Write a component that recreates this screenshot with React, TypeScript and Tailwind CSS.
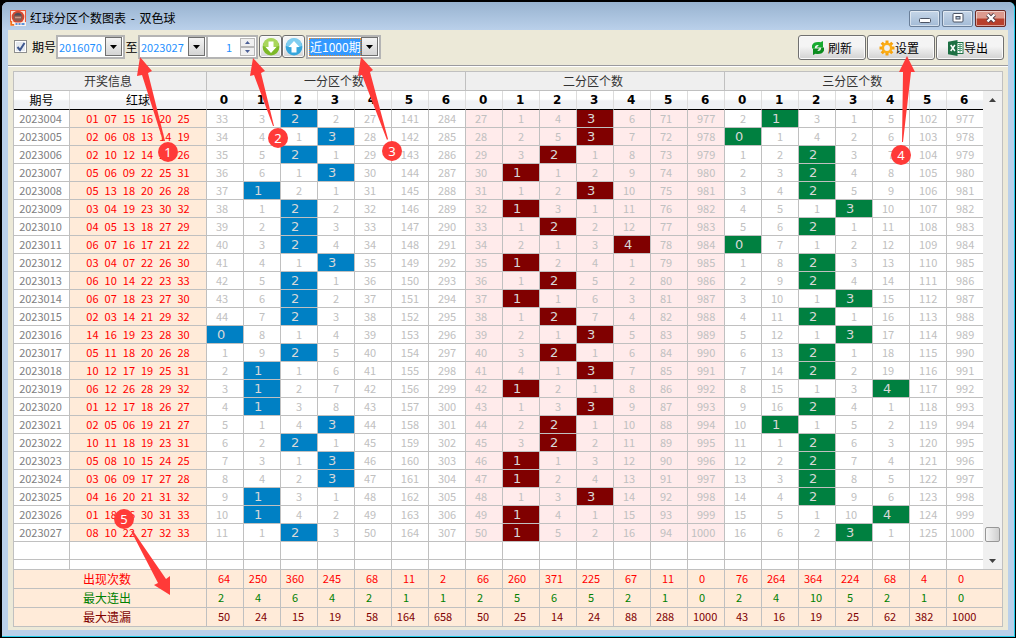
import type { ReactNode } from 'react';

const draws: { balls: string; hits: [number, number, number] }[] = [
  { balls: '01 07 15 16 20 25', hits: [2, 3, 1] },
  { balls: '02 06 08 13 14 19', hits: [3, 3, 0] },
  { balls: '02 10 12 14 20 26', hits: [2, 2, 2] },
  { balls: '05 06 09 22 25 31', hits: [3, 1, 2] },
  { balls: '05 13 18 20 26 28', hits: [1, 3, 2] },
  { balls: '03 04 19 23 30 32', hits: [2, 1, 3] },
  { balls: '04 05 13 18 27 29', hits: [2, 2, 2] },
  { balls: '06 07 16 17 21 22', hits: [2, 4, 0] },
  { balls: '03 04 07 22 26 30', hits: [3, 1, 2] },
  { balls: '06 10 14 22 23 33', hits: [2, 2, 2] },
  { balls: '06 07 18 23 27 30', hits: [2, 1, 3] },
  { balls: '02 03 14 21 29 32', hits: [2, 2, 2] },
  { balls: '14 16 19 23 28 30', hits: [0, 3, 3] },
  { balls: '05 11 18 20 26 28', hits: [2, 2, 2] },
  { balls: '10 12 17 19 25 31', hits: [1, 3, 2] },
  { balls: '06 12 26 28 29 32', hits: [1, 1, 4] },
  { balls: '01 12 17 18 26 27', hits: [1, 3, 2] },
  { balls: '02 05 06 19 21 27', hits: [3, 2, 1] },
  { balls: '10 11 18 19 23 31', hits: [2, 2, 2] },
  { balls: '05 08 10 15 24 25', hits: [3, 1, 2] },
  { balls: '03 06 09 17 27 28', hits: [3, 1, 2] },
  { balls: '04 16 20 21 31 32', hits: [1, 3, 2] },
  { balls: '01 18 26 30 31 33', hits: [1, 1, 4] },
  { balls: '08 10 22 27 32 33', hits: [2, 1, 3] },
];

const FIRST_ISSUE = 2023004;

// Omission counters as they stood before the first visible draw.
const startMisses = [
  [32, 2, 0, 1, 26, 140, 283],
  [26, 0, 3, 0, 5, 70, 976],
  [1, 0, 2, 0, 4, 101, 976],
];

const zones = [
  { title: '一分区个数', hit: 'bg-[#0080c4]', miss: 'bg-white' },
  { title: '二分区个数', hit: 'bg-[#800000]', miss: 'bg-[#ffebeb]' },
  { title: '三分区个数', hit: 'bg-[#008040]', miss: 'bg-white' },
];

type Row = { issue: number; balls: string[]; cells: { value: number; hit: boolean; zone: number }[] };

function buildRows(): Row[] {
  const misses = startMisses.map((z) => [...z]);
  return draws.map((d, i) => ({
    issue: FIRST_ISSUE + i,
    balls: d.balls.split(' '),
    cells: misses.flatMap((zone, z) =>
      zone.map((_, n) => {
        const hit = d.hits[z] === n;
        zone[n] = hit ? 0 : zone[n] + 1;
        return { value: hit ? n : zone[n], hit, zone: z };
      }),
    ),
  }));
}

const rows = buildRows();
const countCols = Array.from({ length: 21 }, (_, i) => i);

const summary = [
  {
    label: '出现次数',
    color: 'text-[#ff0000]',
    values: [64, 250, 360, 245, 68, 11, 2, 66, 260, 371, 225, 67, 11, 0, 76, 264, 364, 224, 68, 4, 0],
  },
  {
    label: '最大连出',
    color: 'text-[#008000]',
    values: [2, 4, 6, 4, 2, 1, 1, 2, 5, 6, 5, 2, 1, 0, 2, 4, 10, 5, 2, 1, 0],
  },
  {
    label: '最大遗漏',
    color: 'text-[#800000]',
    values: [50, 24, 15, 19, 58, 164, 658, 50, 25, 14, 24, 88, 288, 1000, 43, 16, 19, 25, 62, 382, 1000],
  },
];

const line = 'border-r border-b border-[#c0c0c0] p-0 text-center';
const headFill = 'bg-linear-to-b from-white from-45% to-[#eff1f4] to-55%';

function AppLogo() {
  return (
    <svg viewBox="0 0 16 16" className="size-4 shrink-0" aria-hidden="true">
      <rect width="16" height="16" fill="#ef5a3a" />
      <rect x="1" y="1" width="14" height="14" fill="#fbe3d8" />
      <circle cx="8" cy="7" r="6.300" fill="#d8452e" />
      <circle cx="8" cy="7" r="4.600" fill="#8c5a50" />
      <path d="M4.300 5.500a4 4 0 0 1 7.400 0z" fill="#4c4a58" />
      <path d="M5 7.500h6" stroke="#c99a88" strokeWidth="1.500" />
      <path d="M0 12l4 .5h8l4-.5v4H0z" fill="#fdf1ea" />
      <path d="M1.200 11v3.800h3" stroke="#f0701c" strokeWidth="1.800" fill="none" />
      <path d="M5.500 14h2M8.500 14h2M11.500 14h3" stroke="#5b93dc" strokeWidth="2" />
    </svg>
  );
}

function ArrowBall({ up }: { up?: boolean }) {
  return (
    <svg viewBox="0 0 18 18" className="size-4.5" aria-hidden="true">
      <circle cx="9" cy="9" r="8.400" fill={up ? '#35a6dc' : '#7db928'} />
      <path d="M1 8a8 8 0 0 1 16 0q-8 3-16 0z" fill={up ? '#7fcdf0' : '#a9d65c'} />
      <path d={up ? 'M9 3l5.500 6h-3V14.500H6.500V9h-3z' : 'M9 15l5.500-6h-3V3.500H6.500V9h-3z'} fill="#fff" />
    </svg>
  );
}

function RefreshIcon() {
  return (
    <svg viewBox="0 0 12 14" className="mr-1 h-3.5 w-3 shrink-0" aria-hidden="true">
      <path d="M0 7.500V4.500C1 1.500 4 .6 8.500 1.200L11 0v6.500H4.500L6.800 4.200C4.500 3.700 3 4.500 2.700 7.500z" fill="#17ab30" />
      <path d="M12 6.500v3c-1 3-4 3.900-8.500 3.300L1 14V7.500h6.500L5.200 9.800c2.300.5 3.800-.3 4.100-3.300z" fill="#0c8c1f" />
    </svg>
  );
}

function GearIcon() {
  return (
    <svg viewBox="0 0 16 16" className="-ml-1 size-4 shrink-0" aria-hidden="true">
      <g stroke="#f7a20c" strokeWidth="3">
        <path d="M8 .5v15M.5 8h15M2.700 2.700l10.600 10.600M13.300 2.700L2.700 13.300" />
      </g>
      <circle cx="8" cy="8" r="5.400" fill="#fbae17" />
      <circle cx="8" cy="8" r="2.900" fill="#f1f1f1" />
    </svg>
  );
}

function ExcelIcon() {
  return (
    <svg viewBox="0 0 16 16" className="-ml-1 size-4 shrink-0" aria-hidden="true">
      <rect x="8.500" y="2.500" width="6.500" height="11" fill="#fff" stroke="#1d7044" />
      <path d="M10 4.500h4M10 6.500h4M10 8.500h4M10 10.500h4M12 3.500v9" stroke="#4d9a70" />
      <path d="M0 1.800L9.500 0v16L0 14.200z" fill="#1d7044" />
      <path d="M2.700 5l4.200 6M6.900 5l-4.200 6" stroke="#fff" strokeWidth="1.500" />
    </svg>
  );
}

function Combo({
  label,
  value,
  selected,
  className,
}: {
  label: string;
  value: string;
  selected?: boolean;
  className: string;
}) {
  return (
    <div className={`relative flex h-6 items-center border-2 border-[#b4b4b4] bg-white pr-px pl-px ${className}`}>
      <select
        aria-label={label}
        defaultValue={value}
        className={
          selected
            ? 'h-[18px] min-w-0 flex-1 appearance-none border border-dotted border-[#e08a30] bg-[#3399ff] p-0 text-xs leading-4 text-white outline-none'
            : 'h-[18px] min-w-0 flex-1 appearance-none bg-white p-0 text-[11px] leading-4 text-[#1e90ff] outline-none'
        }
      >
        <option>{value}</option>
      </select>
      <span
        aria-hidden="true"
        className="pointer-events-none flex h-[19px] w-[17px] shrink-0 items-center justify-center border border-[#707070] bg-linear-to-b from-[#f4f4f4] to-[#d4d4d4]"
      >
        <svg viewBox="0 0 7 4" className="h-1 w-[7px]">
          <path d="M0 0h7L3.500 4z" fill="#000" />
        </svg>
      </span>
    </div>
  );
}

const raised = 'rounded-[3px] border border-[#707070] bg-linear-to-b from-[#f4f4f4] from-45% to-[#d2d2d2] shadow-[inset_0_0_0_1px_#fafafa]';

function ToolButton({ icon, children }: { icon: ReactNode; children: string }) {
  return (
    <button type="button" className={`flex h-[25px] w-17 items-center justify-center text-xs text-black ${raised}`}>
      {icon}
      {children}
    </button>
  );
}

const captionBase = 'flex h-[17px] w-[31px] items-center justify-center rounded-[2px] border shadow-[inset_0_0_0_1px_rgba(255,255,255,0.5)]';

function TitleBar() {
  return (
    <header className="flex h-7 items-center justify-between rounded-t-md bg-linear-to-b from-[#98b3d0] to-[#bad0ea] pr-2 pl-2">
      <div className="flex items-center gap-1 pt-1">
        <AppLogo />
        <h1 className="text-xs text-black">
          红球分区个数图表 <span className="px-0.5">-</span> 双色球
        </h1>
      </div>
      <div className="flex gap-0.5 pt-1">
        <button type="button" aria-label="最小化" className={`${captionBase} border-[#6a7f99] bg-linear-to-b from-[#c6d6e8] to-[#a3bbd6]`}>
          <svg viewBox="0 0 12 10" className="h-2.5 w-3">
            <rect x=".5" y="5.500" width="11" height="4" rx="1" fill="#fff" stroke="#4b5363" />
          </svg>
        </button>
        <button type="button" aria-label="最大化" className={`${captionBase} border-[#6a7f99] bg-linear-to-b from-[#c6d6e8] to-[#a3bbd6]`}>
          <svg viewBox="0 0 12 10" className="h-2.5 w-3">
            <rect x="1" y=".5" width="10" height="8.500" rx="1" fill="#fff" stroke="#4b5363" />
            <rect x="4" y="3.500" width="4" height="2.500" fill="#b5c8de" stroke="#4b5363" />
          </svg>
        </button>
        <button type="button" aria-label="关闭" className={`${captionBase} border-[#6b2a25] bg-linear-to-b from-[#dc9a8e] from-45% to-[#b8402c] to-55%`}>
          <svg viewBox="0 0 12 10" className="h-2.5 w-3">
            <path d="M2.500 1.500l7 7M9.500 1.500l-7 7" stroke="#4b3b46" strokeWidth="4" />
            <path d="M2.500 1.500l7 7M9.500 1.500l-7 7" stroke="#fff" strokeWidth="2.400" />
          </svg>
        </button>
      </div>
    </header>
  );
}

function Toolbar() {
  return (
    <div className="flex h-[35px] items-center justify-between pr-1 pl-1.5">
      <div className="flex items-center pb-0.5">
        <label className="flex items-center gap-[5px] text-xs text-black">
          <span className="relative flex size-[13px] items-center justify-center">
            <input
              type="checkbox"
              defaultChecked
              className="peer size-[13px] appearance-none border border-[#8e8f8f] bg-[#e4e8ee] shadow-[inset_0_0_0_1px_#fff]"
            />
            <svg viewBox="0 0 10 10" className="pointer-events-none absolute hidden size-2.5 peer-checked:block" aria-hidden="true">
              <path d="M1.500 5l2.500 3L8.500 1" fill="none" stroke="#3d578f" strokeWidth="2" />
            </svg>
          </span>
          期号
        </label>
        <Combo label="起始期号" value="2016070" className="w-[69px]" />
        <span className="w-[13px] text-center text-xs text-black">至</span>
        <Combo label="结束期号" value="2023027" className="w-[70px]" />
        <div className="flex h-6 w-[50px] items-center border-y-2 border-r-2 border-[#b4b4b4] bg-white pr-px">
          <input
            aria-label="步长"
            defaultValue="1"
            className="h-[18px] min-w-0 flex-1 bg-white pr-2 text-right text-[11px] text-[#1e90ff] outline-none"
          />
          <div className="flex shrink-0 flex-col">
            <button type="button" aria-label="增加" className="flex h-[9px] w-[15px] items-center justify-center border border-[#b8b8b8] bg-[#f0f0f0]">
              <svg viewBox="0 0 5 3" className="h-[3px] w-[5px]"><path d="M0 3h5L2.500 0z" fill="#4a5f97" /></svg>
            </button>
            <button type="button" aria-label="减少" className="flex h-[9px] w-[15px] items-center justify-center border border-[#b8b8b8] bg-[#f0f0f0]">
              <svg viewBox="0 0 5 3" className="h-[3px] w-[5px]"><path d="M0 0h5L2.500 3z" fill="#4a5f97" /></svg>
            </button>
          </div>
        </div>
        <div className="flex px-px">
          <button type="button" aria-label="向下" className={`flex size-[23px] items-center justify-center ${raised}`}>
            <ArrowBall />
          </button>
          <button type="button" aria-label="向上" className={`flex size-[23px] items-center justify-center ${raised}`}>
            <ArrowBall up />
          </button>
        </div>
        <Combo label="范围" value="近1000期" selected className="w-[75px]" />
      </div>
      <div className="flex gap-px">
        <ToolButton icon={<RefreshIcon />}>刷新</ToolButton>
        <ToolButton icon={<GearIcon />}>设置</ToolButton>
        <ToolButton icon={<ExcelIcon />}>导出</ToolButton>
      </div>
    </div>
  );
}

function EmptyRow({ height }: { height: string }) {
  return (
    <tr className={height}>
      <td className={line} />
      <td className={line} />
      {countCols.map((c) => (
        <td key={c} className={line} />
      ))}
    </tr>
  );
}

const headCell = `border-r border-b border-r-[#dcdcdc] border-b-black p-0 ${headFill}`;

function ChartTable() {
  return (
    <table className="w-full table-fixed border-separate border-spacing-0 bg-white text-[11px] leading-[14px]">
      <colgroup>
        <col className="w-14" />
        <col className="w-[137px]" />
        {countCols.map((c) => (
          <col key={c} className="w-[37px]" />
        ))}
      </colgroup>
      <thead>
        <tr className="h-[19px] bg-[#efefef] text-xs leading-4 text-[#333333]">
          <th colSpan={2} className={`${line} pr-1 font-normal`}>开奖信息</th>
          {zones.map((z) => (
            <th key={z.title} colSpan={7} className={`${line} pr-1 font-normal`}>{z.title}</th>
          ))}
        </tr>
        <tr className="h-[19px] text-xs leading-4 text-black">
          <th className={`${headCell} font-normal`}>期号</th>
          <th className={`${headCell} font-normal`}>红球</th>
          {countCols.map((c) => (
            <th key={c} className={`${headCell} pr-0.5 font-['DejaVu_Sans',sans-serif] font-bold`}>
              {c % 7}
            </th>
          ))}
        </tr>
      </thead>
      <tbody>
        {rows.map((r) => (
          <tr key={r.issue} className="h-[18px]">
            <td className={`${line} pr-0.5 pb-0.5 text-[#808080]`}>{r.issue}</td>
            <td className={`${line} pb-0.5 bg-[#ffebd9] text-[#ff0000]`}>
              <span className="flex justify-center gap-1.5">
                {r.balls.map((b) => (
                  <span key={b}>{b}</span>
                ))}
              </span>
            </td>
            {r.cells.map((c, i) =>
              c.hit ? (
                <td key={i} className={`${line} pr-2 font-['DejaVu_Sans',sans-serif] text-[13px] leading-[14px] text-[#d8d8d8] ${zones[c.zone].hit}`}>
                  {c.value}
                </td>
              ) : (
                <td key={i} className={`${line} pb-0.5 text-[#c0c0c0] ${String(c.value).length % 2 ? '' : 'pr-1.5'} ${zones[c.zone].miss}`}>
                  {c.value}
                </td>
              ),
            )}
          </tr>
        ))}
        <EmptyRow height="h-[18px]" />
        <EmptyRow height="h-2.5" />
      </tbody>
      <tfoot>
        {summary.map((s) => (
          <tr key={s.label} className={`h-[19px] bg-[#ffebd9] ${s.color}`}>
            <th colSpan={2} className={`${line} pr-1.5 text-xs leading-4 font-normal`}>{s.label}</th>
            {s.values.map((v, i) => (
              <td key={i} className={`${line} pb-0.5 ${String(v).length % 2 ? 'pr-2' : 'pr-0.5'}`}>{v}</td>
            ))}
          </tr>
        ))}
      </tfoot>
    </table>
  );
}

function ScrollColumn() {
  return (
    <div className="flex w-[19px] shrink-0 flex-col">
      <div className="h-[19px] border-b border-[#c0c0c0] bg-[#efefef]" />
      <div className="flex flex-1 flex-col items-center border-b border-[#c0c0c0] bg-[#f0f0f0]">
        <button type="button" aria-label="向上滚动" className="flex size-[17px] items-center justify-center">
          <svg viewBox="0 0 7 4" className="h-1 w-[7px]"><path d="M0 4h7L3.500 0z" fill="#404040" /></svg>
        </button>
        <div className="flex-1" />
        <div className="mb-2.5 h-[15px] w-[15px] rounded-[2px] border border-[#979797] bg-linear-to-r from-[#f5f5f5] to-[#cfcfcf]" />
        <button type="button" aria-label="向下滚动" className="flex size-[17px] items-center justify-center">
          <svg viewBox="0 0 7 4" className="h-1 w-[7px]"><path d="M0 0h7L3.500 4z" fill="#404040" /></svg>
        </button>
      </div>
      {summary.map((s) => (
        <div key={s.label} className="h-[19px] border-b border-[#c0c0c0] bg-[#ffebd9]" />
      ))}
    </div>
  );
}

const arrows = [
  '140,57 152,71 148,73 165,141 163,141 142,75 137,76',
  '253,58 265,71 261,73 274,126 273,126 254,75 250,76',
  '361,57 373,70 370,72 388,139 387,140 362,75 358,76',
  '907,56 915,72 911,72 903,142 902,142 903,72 899,72',
  '170,595 154,585 158,583 131,531 133,531 166,579 170,576',
];

const badges = [
  { n: 1, x: 168, y: 152 },
  { n: 2, x: 278, y: 138 },
  { n: 3, x: 392, y: 151 },
  { n: 4, x: 901, y: 155 },
  { n: 5, x: 124, y: 519 },
];

function Callouts() {
  return (
    <div className="pointer-events-none absolute top-0 left-0">
      <svg width="1016" height="638" className="absolute top-0 left-0 max-w-none" aria-hidden="true">
        {arrows.map((p) => (
          <polygon key={p} points={p} fill="#ff3a38" />
        ))}
      </svg>
      {badges.map((b) => (
        <span
          key={b.n}
          style={{ left: b.x - 10, top: b.y - 10 }}
          className="absolute flex size-5 items-center justify-center rounded-full bg-[#ff3a38] font-['Noto_Sans',sans-serif] text-[13px] leading-5 text-white"
        >
          {b.n}
        </span>
      ))}
    </div>
  );
}

export default function App() {
  return (
    <div className="relative min-h-screen bg-black pt-0.5 pr-px pb-px pl-0.5 font-['Noto_Sans_CJK_SC',sans-serif]">
      <div className="rounded-t-md border-r border-b border-[#22cbe8] bg-[#bad0ea]">
        <TitleBar />
        <main className="mx-1.5 mb-1.5 bg-[#ece9d8] pb-[3px]">
          <Toolbar />
          <div className="border-t border-b border-t-[#9a9a9f] border-b-white" />
          <div className="mx-[5px] mt-1 flex border-t border-r border-l border-[#c0c0c0]">
            <div className="min-w-0 flex-1">
              <ChartTable />
            </div>
            <ScrollColumn />
          </div>
        </main>
      </div>
      <Callouts />
    </div>
  );
}
